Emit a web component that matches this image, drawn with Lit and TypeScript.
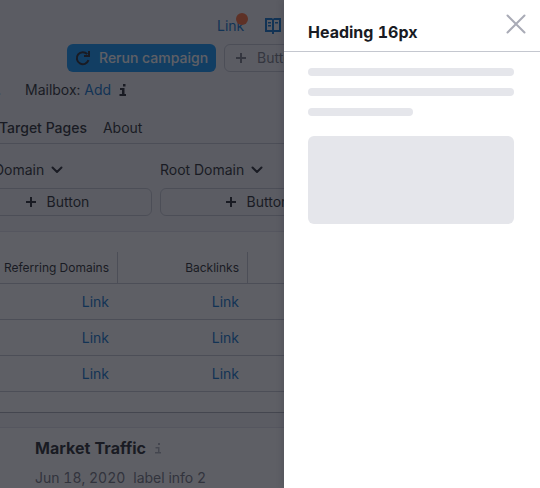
import { LitElement, html, css } from "lit";
import { customElement } from "lit/decorators.js";

const plus = html`<svg width="16" height="16" viewBox="0 0 16 16" aria-hidden="true">
  <path d="M7 3h2v4h4v2H9v4H7V9H3V7h4z" fill="currentColor" />
</svg>`;

const chevron = html`<svg width="16" height="16" viewBox="0 0 16 16" aria-hidden="true">
  <path d="M3.500 5.500 8 10l4.500-4.500" fill="none" stroke="currentColor" stroke-width="2" stroke-linecap="round" stroke-linejoin="round" />
</svg>`;

const info = html`<svg width="16" height="16" viewBox="0 0 16 16" aria-hidden="true">
  <path d="M8 2h2.500v2.500H8zM5 6h4.500v6H11v2H4.500v-2H7V8H5z" fill="currentColor" />
</svg>`;

const infoThin = html`<svg width="16" height="16" viewBox="0 0 16 16" aria-hidden="true">
  <path d="M8 3h2v2H8zM5.500 7H9.500v5H11v1.500H5V12h3V8.500H5.500z" fill="currentColor" />
</svg>`;

@customElement("side-drawer")
export class SideDrawer extends LitElement {
  static styles = css`
    :host {
      display: block;
      box-sizing: border-box;
      background: #fff;
      box-shadow: 0 0 8px rgba(25, 27, 35, 0.2);
    }
    .head {
      display: flex;
      justify-content: space-between;
      align-items: flex-end;
      box-sizing: border-box;
      height: 52px;
      padding: 0 12px 8px 24px;
      border-bottom: 1px solid #c4c7cf;
    }
    h2 {
      margin: 0;
      font-size: 16px;
      line-height: 22px;
      font-weight: 700;
      color: #191b23;
    }
    .close {
      display: flex;
      align-self: flex-start;
      margin-top: 12px;
      padding: 0;
      border: 0;
      background: none;
      color: #a9abb6;
    }
    .body {
      display: flex;
      flex-direction: column;
      gap: 12px;
      padding: 16px 26px 16px 24px;
    }
    .bar {
      height: 8px;
      border-radius: 4px;
      background: #e5e6eb;
    }
    .short {
      width: 51%;
    }
    .block {
      height: 88px;
      margin-top: 8px;
      border-radius: 6px;
      background: #e5e6eb;
    }
  `;

  render() {
    return html`
      <header class="head">
        <h2>Heading 16px</h2>
        <button class="close" aria-label="Close">
          <svg width="24" height="24" viewBox="0 0 24 24" aria-hidden="true">
            <path d="M3.500 3.500l17 17M20.500 3.500l-17 17" fill="none" stroke="currentColor" stroke-width="2" stroke-linecap="round" />
          </svg>
        </button>
      </header>
      <div class="body">
        <div class="bar"></div>
        <div class="bar"></div>
        <div class="bar short"></div>
        <div class="block"></div>
      </div>
    `;
  }
}

@customElement("app-root")
export class AppRoot extends LitElement {
  static styles = css`
    :host {
      display: block;
      position: relative;
      height: 100vh;
      overflow: hidden;
      background: #f4f5f9;
      color: #191b23;
      font: 14px/20px Inter, "Liberation Sans", sans-serif;
      font-variant-numeric: tabular-nums;
    }
    a {
      color: #006dca;
      text-decoration: none;
    }
    svg {
      display: block;
      flex: none;
    }
    button {
      font: inherit;
      color: inherit;
    }
    /* The report is scrolled sideways under the drawer. */
    .page {
      margin-left: -40px;
      white-space: nowrap;
    }
    .row {
      display: flex;
      align-items: center;
    }
    .top {
      gap: 21px;
      padding: 16px 0 8px 257px;
    }
    .badged {
      position: relative;
    }
    .dot {
      position: absolute;
      top: -3px;
      right: -4px;
      width: 12px;
      height: 12px;
      border-radius: 50%;
      background: #ff642d;
    }
    .actions {
      gap: 8px;
      padding-left: 107px;
    }
    .btn {
      display: flex;
      align-items: center;
      justify-content: center;
      gap: 8px;
      box-sizing: border-box;
      height: 28px;
      padding: 0 8px;
      border: 1px solid #c4c7cf;
      border-radius: 6px;
      background: none;
    }
    .primary {
      border: 0;
      background: #008ff8;
      color: #fff;
      font-weight: 500;
    }
    .primary svg {
      color: #191b23;
    }
    .muted {
      color: #73757f;
    }
    .meta {
      padding: 8px 0;
    }
    .end {
      width: 41px;
      margin-right: 24px;
      text-align: right;
    }
    .meta a {
      margin: 0 4px;
    }
    .tabs {
      gap: 16px;
      box-sizing: border-box;
      height: 36px;
      padding: 4px 0 0 39px;
      border-bottom: 1px solid #c4c7cf;
    }
    .tabs a {
      color: inherit;
    }
    .tabs .current {
      font-weight: 500;
    }
    .filters {
      display: grid;
      grid-template-columns: repeat(3, 192px);
      gap: 8px;
      padding: 16px 0 15px;
    }
    .filter {
      display: flex;
      flex-direction: column;
      gap: 8px;
    }
    .pick {
      display: flex;
      align-items: center;
      gap: 5px;
      padding: 0;
      border: 0;
      background: none;
    }
    .card {
      background: #fff;
      border: 1px solid #e0e1e9;
    }
    .list {
      padding: 20px 0;
      border-bottom-color: #a9abb6;
    }
    table {
      width: 100%;
      table-layout: fixed;
      border-collapse: separate;
      border-spacing: 0;
    }
    .wide {
      width: 157px;
    }
    .mid {
      width: 130px;
    }
    th,
    td {
      box-sizing: border-box;
      padding: 0 8px;
      text-align: right;
      border-bottom: 1px solid #c4c7cf;
    }
    th {
      height: 32px;
      font-size: 12px;
      line-height: 16px;
      font-weight: 400;
      border-right: 1px solid #c4c7cf;
    }
    th:last-child {
      border-right: 0;
    }
    td {
      height: 36px;
      padding-right: 9px;
    }
    .traffic {
      margin-top: 14px;
      padding: 8px 0 24px 74px;
    }
    h3 {
      margin: 0;
      font-size: 16px;
      line-height: 24px;
      font-weight: 700;
    }
    .title {
      gap: 4px;
      color: #a9abb6;
    }
    .title h3 {
      color: #191b23;
    }
    .sub {
      gap: 8px;
      margin-top: 8px;
      color: #6c6e79;
    }
    .scrim {
      position: absolute;
      inset: 0;
      background: rgba(25, 27, 35, 0.7);
    }
    side-drawer {
      position: absolute;
      inset: 0 0 0 auto;
      width: 256px;
    }
  `;

  private filter(name: string) {
    return html`<div class="filter">
      <button class="pick">${name} ${chevron}</button>
      <button class="btn">${plus} Button</button>
    </div>`;
  }

  render() {
    return html`
      <main class="page">
        <div class="row top">
          <a class="badged" href="#">Link<span class="dot"></span></a>
          <a href="#" aria-label="Manual">
            <svg width="16" height="16" viewBox="0 0 16 16" aria-hidden="true">
              <path d="M0 0h7l1 1 1-1h7v14H9v2H7v-2H0zM2 2v10h5V2zM9 2v10h5V2z" fill="currentColor" fill-rule="evenodd" />
              <path d="M3 4h3v1.500H3zM3 7h3v1.500H3zM10 4h3v1.500h-3z" fill="currentColor" />
            </svg>
          </a>
        </div>
        <div class="row actions">
          <button class="btn primary">
            <svg width="16" height="16" viewBox="0 0 16 16" aria-hidden="true">
              <path d="M13.500 10.200A6 6 0 1 1 12.300 4.200M9 6H14V1" fill="none" stroke="currentColor" stroke-width="2" />
            </svg>
            Rerun campaign
          </button>
          <button class="btn muted">${plus} Button</button>
        </div>
        <div class="row meta">
          <span class="end">.</span>
          <span>Mailbox:</span>
          <a href="#">Add</a>
          ${info}
        </div>
        <nav class="row tabs">
          <a class="current" href="#">Target Pages</a>
          <a href="#">About</a>
        </nav>
        <div class="filters">
          ${["Root Domain", "Root Domain", "Root Domain"].map((n) => this.filter(n))}
        </div>
        <section class="card list">
          <table>
            <colgroup>
              <col class="wide" />
              <col class="mid" />
              <col />
            </colgroup>
            <thead>
              <tr>
                <th>Referring Domains</th>
                <th>Backlinks</th>
                <th></th>
              </tr>
            </thead>
            <tbody>
              ${[1, 2, 3].map(
                () => html`<tr>
                  <td><a href="#">Link</a></td>
                  <td><a href="#">Link</a></td>
                  <td></td>
                </tr>`
              )}
            </tbody>
          </table>
        </section>
        <section class="card traffic">
          <div class="row title">
            <h3>Market Traffic</h3>
            ${infoThin}
          </div>
          <div class="row sub"><span>Jun 18, 2020</span><span>label info 2</span></div>
        </section>
      </main>
      <div class="scrim"></div>
      <side-drawer></side-drawer>
    `;
  }
}
